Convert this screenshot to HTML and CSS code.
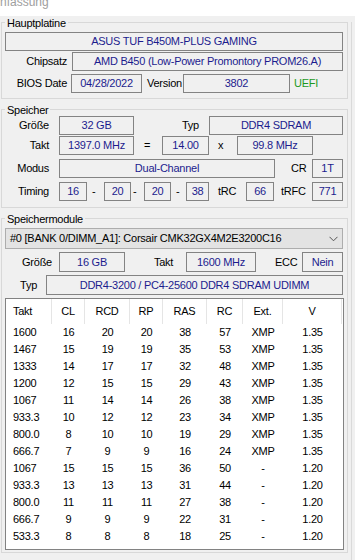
FILE: index.html
```html
<!DOCTYPE html>
<html>
<head>
<meta charset="utf-8">
<link rel="stylesheet" href="styles.css">
</head>
<body>
<div class="title"><span>nfassung</span></div>
<div class="page">
  <section class="group g-board">
    <span class="legend">Hauptplatine</span>
    <div class="row"><div class="box w338">ASUS TUF B450M-PLUS GAMING</div></div>
    <div class="row mt1"><span class="lbl w62">Chipsatz</span><div class="box ml5 w271">AMD B450 (Low-Power Promontory PROM26.A)</div></div>
    <div class="row mt3"><span class="lbl w62">BIOS Date</span><div class="box ml4 w71">04/28/2022</div><span class="txt w41 pl5">Version</span><div class="box w107">3802</div><span class="uefi">UEFI</span></div>
  </section>

  <section class="group g-mem">
    <span class="legend">Speicher</span>
    <div class="row"><span class="lbl w44">Größe</span><div class="box ml10 w75">32 GB</div><span class="txt w75 pl48">Typ</span><div class="box w134">DDR4 SDRAM</div></div>
    <div class="row mt1"><span class="lbl w44">Takt</span><div class="box ml10 w75">1397.0 MHz</div><span class="txt w28 pl10">=</span><div class="box w47">14.00</div><span class="txt w28 pl9">x</span><div class="box w76">99.8 MHz</div></div>
    <div class="row mt4"><span class="lbl w44">Modus</span><div class="box ml10 w216">Dual-Channel</div><span class="txt w37 pl16">CR</span><div class="box w31">1T</div></div>
    <div class="row mt4"><span class="lbl w44">Timing</span><div class="box ml10 w28">16</div><span class="txt w17 pl5">-</span><div class="box w27">20</div><span class="txt w13 pl2">-</span><div class="box w27">20</div><span class="txt w15 pl5">-</span><div class="box w23">38</div><span class="txt w37 pl9">tRC</span><div class="box w28">66</div><span class="txt w38 pl7">tRFC</span><div class="box w31">771</div></div>
  </section>

  <section class="group g-mod">
    <span class="legend">Speichermodule</span>
    <div class="combo">
      <span>#0 [BANK 0/DIMM_A1]: Corsair CMK32GX4M2E3200C16</span>
      <svg class="chev" width="9" height="6" viewBox="0 0 9 6"><path d="M0.5 0.8 L4.5 4.8 L8.5 0.8" fill="none" stroke="#555" stroke-width="1"/></svg>
    </div>
    <div class="row h20 mt3"><span class="lbl w47">Größe</span><div class="box h20 ml7 w66">16 GB</div><span class="txt w61 pl29">Takt</span><div class="box h20 w70">1600 MHz</div><span class="txt w46 pl19">ECC</span><div class="box h20 w41">Nein</div></div>
    <div class="row h20 mt3"><span class="lbl w32">Typ</span><div class="box h20 ml9 w297">DDR4-3200 / PC4-25600 DDR4 SDRAM UDIMM</div></div>
    <div class="list">
      <div class="tr head"><span class="c-l">Takt</span><span>CL</span><span>RCD</span><span>RP</span><span>RAS</span><span>RC</span><span>Ext.</span><span>V</span></div>
      <div class="tr"><span class="c-l">1600</span><span>16</span><span>20</span><span>20</span><span>38</span><span>57</span><span>XMP</span><span>1.35</span></div>
      <div class="tr"><span class="c-l">1467</span><span>15</span><span>19</span><span>19</span><span>35</span><span>53</span><span>XMP</span><span>1.35</span></div>
      <div class="tr"><span class="c-l">1333</span><span>14</span><span>17</span><span>17</span><span>32</span><span>48</span><span>XMP</span><span>1.35</span></div>
      <div class="tr"><span class="c-l">1200</span><span>12</span><span>15</span><span>15</span><span>29</span><span>43</span><span>XMP</span><span>1.35</span></div>
      <div class="tr"><span class="c-l">1067</span><span>11</span><span>14</span><span>14</span><span>26</span><span>38</span><span>XMP</span><span>1.35</span></div>
      <div class="tr"><span class="c-l">933.3</span><span>10</span><span>12</span><span>12</span><span>23</span><span>34</span><span>XMP</span><span>1.35</span></div>
      <div class="tr"><span class="c-l">800.0</span><span>8</span><span>10</span><span>10</span><span>19</span><span>29</span><span>XMP</span><span>1.35</span></div>
      <div class="tr"><span class="c-l">666.7</span><span>7</span><span>9</span><span>9</span><span>16</span><span>24</span><span>XMP</span><span>1.35</span></div>
      <div class="tr"><span class="c-l">1067</span><span>15</span><span>15</span><span>15</span><span>36</span><span>50</span><span>-</span><span>1.20</span></div>
      <div class="tr"><span class="c-l">933.3</span><span>13</span><span>13</span><span>13</span><span>31</span><span>44</span><span>-</span><span>1.20</span></div>
      <div class="tr"><span class="c-l">800.0</span><span>11</span><span>11</span><span>11</span><span>27</span><span>38</span><span>-</span><span>1.20</span></div>
      <div class="tr"><span class="c-l">666.7</span><span>9</span><span>9</span><span>9</span><span>22</span><span>31</span><span>-</span><span>1.20</span></div>
      <div class="tr"><span class="c-l">533.3</span><span>8</span><span>8</span><span>8</span><span>18</span><span>25</span><span>-</span><span>1.20</span></div>
    </div>
  </section>
</div>
</body>
</html>
```

FILE: styles.css
```css
* { box-sizing: border-box; }

html, body {
  margin: 0;
  padding: 0;
}

body {
  width: 355px;
  height: 560px;
  overflow: hidden;
  background: #f0f0f0;
  color: #000;
  font-family: "Liberation Sans", Arial, sans-serif;
  font-size: 11px;
  line-height: 13px;
  letter-spacing: -0.25px;
}

.title {
  height: 16px;
  background: #fff;
  color: #9e9e9e;
  font-size: 12px;
  line-height: 12px;
  overflow: hidden;
  letter-spacing: 0;
}

.title span {
  display: block;
  margin-top: -4px;
}

.page {
  width: 352px;
  height: 544px;
  padding-left: 1px;
  border-right: 1px solid #dadada;
}

.group {
  position: relative;
  width: 347px;
  border: 1px solid #d8d8d8;
  padding-left: 3px;
  padding-right: 4px;
}

.legend {
  position: absolute;
  top: -6px;
  left: 3px;
  padding: 0 2px;
  background: #f0f0f0;
  line-height: 13px;
  white-space: nowrap;
}

.g-board {
  margin-top: 6px;
  padding-top: 9px;
  padding-bottom: 5px;
}

.g-mem {
  margin-top: 10px;
  padding-top: 6px;
  padding-bottom: 6px;
}

.g-mod {
  margin-top: 10px;
  padding-top: 9px;
  padding-bottom: 2px;
}

.row {
  display: flex;
  align-items: center;
  height: 19px;
}

.row.h20 { height: 20px; }

.mt1 { margin-top: 1px; }
.mt3 { margin-top: 3px; }
.mt4 { margin-top: 4px; }

.box {
  flex: none;
  height: 19px;
  border: 1px solid #838383;
  color: #1c1c8e;
  text-align: center;
  line-height: 17px;
  white-space: nowrap;
  overflow: hidden;
}

.box.h20 {
  height: 20px;
  line-height: 18px;
}

.lbl {
  flex: none;
  text-align: right;
  white-space: nowrap;
}

.txt {
  flex: none;
  white-space: nowrap;
}

.uefi {
  margin-left: 4px;
  color: #1d9a1d;
}

.ml4 { margin-left: 4px; }
.ml5 { margin-left: 5px; }
.ml7 { margin-left: 7px; }
.ml9 { margin-left: 9px; }
.ml10 { margin-left: 10px; }

.pl2 { padding-left: 2px; }
.pl5 { padding-left: 5px; }
.pl7 { padding-left: 7px; }
.pl9 { padding-left: 9px; }
.pl10 { padding-left: 10px; }
.pl16 { padding-left: 16px; }
.pl19 { padding-left: 19px; }
.pl29 { padding-left: 29px; }
.pl48 { padding-left: 48px; }

.w13 { width: 13px; }
.w15 { width: 15px; }
.w17 { width: 17px; }
.w23 { width: 23px; }
.w27 { width: 27px; }
.w28 { width: 28px; }
.w31 { width: 31px; }
.w32 { width: 32px; }
.w37 { width: 37px; }
.w38 { width: 38px; }
.w41 { width: 41px; }
.w44 { width: 44px; }
.w46 { width: 46px; }
.w47 { width: 47px; }
.w61 { width: 61px; }
.w62 { width: 62px; }
.w66 { width: 66px; }
.w70 { width: 70px; }
.w71 { width: 71px; }
.w75 { width: 75px; }
.w76 { width: 76px; }
.w107 { width: 107px; }
.w134 { width: 134px; }
.w216 { width: 216px; }
.w271 { width: 271px; }
.w297 { width: 297px; }
.w338 { width: 338px; }

.combo {
  display: flex;
  align-items: center;
  justify-content: space-between;
  width: 338px;
  height: 21px;
  padding: 0 4px 0 4px;
  background: #e3e3e3;
  border: 1px solid #adadad;
  white-space: nowrap;
}

.chev {
  flex: none;
  margin-right: 0;
}

.list {
  margin-top: 3px;
  width: 339px;
  height: 252px;
  background: #fff;
  border: 1px solid #828282;
  overflow: hidden;
}

.tr {
  display: grid;
  grid-template-columns: 46px 33px 45px 33px 44px 36px 40px 59px;
  height: 17px;
  line-height: 17px;
}

.tr span {
  text-align: center;
  white-space: nowrap;
}

.tr .c-l {
  text-align: left;
  padding-left: 7px;
}

.tr.head {
  height: 25px;
  line-height: 25px;
}

.tr.head span {
  border-right: 1px solid #e5e5e5;
}
```
